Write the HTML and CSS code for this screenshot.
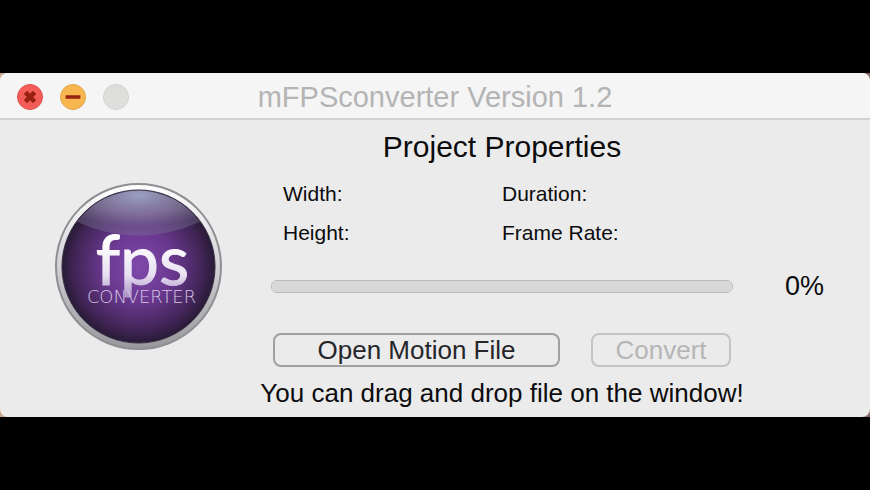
FILE: index.html
```
<!DOCTYPE html>
<html lang="en">
<head>
    <meta charset="UTF-8">
    <meta name="viewport" content="width=device-width, initial-scale=1.0">
    <title>mFPSconverter Version 1.2</title>
    <link rel="stylesheet" href="styles.css">
</head>
<body>
    <div class="desktop">
        <div class="window">
            <!-- Title Bar -->
            <header class="title-bar">
                <div class="window-buttons">
                    <button type="button" class="dot close" aria-label="Close">
                        <svg viewBox="0 0 26 26"><path d="M8 8L18 18M18 8L8 18"/></svg>
                    </button>
                    <button type="button" class="dot minimize" aria-label="Minimize">
                        <svg viewBox="0 0 26 26"><path d="M5 13H21"/></svg>
                    </button>
                    <button type="button" class="dot zoom" aria-label="Zoom" disabled></button>
                </div>
                <h1>mFPSconverter Version 1.2</h1>
            </header>

            <main class="content">
                <!-- Logo -->
                <svg class="logo" viewBox="0 0 170 170" role="img" aria-label="fps converter">
                    <defs>
                        <linearGradient id="rim" x1="0" y1="0" x2="0" y2="1">
                            <stop offset="0" stop-color="#ffffff"/>
                            <stop offset="0.5" stop-color="#d2d1d6"/>
                            <stop offset="1" stop-color="#98979c"/>
                        </linearGradient>
                        <radialGradient id="ball" cx="0.5" cy="0.5" r="0.52">
                            <stop offset="0" stop-color="#8049ab"/>
                            <stop offset="0.45" stop-color="#69388e"/>
                            <stop offset="0.8" stop-color="#422558"/>
                            <stop offset="1" stop-color="#22182e"/>
                        </radialGradient>
                        <radialGradient id="shine" cx="0.5" cy="0.1" r="0.7">
                            <stop offset="0" stop-color="#a5aed0" stop-opacity="0.9"/>
                            <stop offset="0.6" stop-color="#9a92b4" stop-opacity="0.65"/>
                            <stop offset="1" stop-color="#7c7398" stop-opacity="0.4"/>
                        </radialGradient>
                        <linearGradient id="letters" x1="0" y1="0" x2="0" y2="1">
                            <stop offset="0.3" stop-color="#ffffff"/>
                            <stop offset="0.7" stop-color="#e8e0f2"/>
                            <stop offset="1" stop-color="#a184bd"/>
                        </linearGradient>
                    </defs>
                    <circle cx="85" cy="85" r="83" fill="url(#rim)" stroke="#8f8e93" stroke-width="2"/>
                    <circle cx="85" cy="85" r="77" fill="url(#ball)" stroke="#3b3145" stroke-width="1"/>
                    <path d="M23 40A77 77 0 0 1 147 40Q85 68 23 40Z" fill="url(#shine)"/>
                    <text class="logo-name" x="89" y="104" text-anchor="middle" fill="url(#letters)" stroke="url(#letters)">fps</text>
                    <text class="logo-sub" x="88" y="122" text-anchor="middle">CONVERTER</text>
                </svg>

                <h2>Project Properties</h2>

                <!-- Project Fields -->
                <div class="fields">
                    <span>Width:</span>
                    <span>Duration:</span>
                    <span>Height:</span>
                    <span>Frame Rate:</span>
                </div>

                <!-- Progress -->
                <progress id="progress" value="0" max="100"></progress>
                <label class="percent" for="progress">0%</label>

                <!-- Buttons -->
                <div class="buttons">
                    <button type="button" class="btn open">Open Motion File</button>
                    <button type="button" class="btn convert" disabled>Convert</button>
                </div>

                <p class="hint">You can drag and drop file on the window!</p>
            </main>
        </div>
    </div>
</body>
</html>
```
FILE: styles.css
```
/* Basic Reset */
* { box-sizing: border-box; margin: 0; padding: 0; }

body {
    min-height: 100vh;
    display: flex;
    align-items: center;
    background: #000;
    font-family: "Liberation Sans", Arial, sans-serif;
    color: #0c0c0e;
}

.desktop {
    width: 100%;
    background: linear-gradient(to right, #cda88f, #8a6a66);
}

.window {
    background: #ebebeb;
    border-radius: 8px;
    overflow: hidden;
}

/* Title Bar */
.title-bar {
    display: grid;
    grid-template-columns: 1fr auto 1fr;
    align-items: center;
    height: 47px;
    padding: 3px 17px 0;
    background: #f5f5f5;
    border-bottom: 2px solid #d2d2d2;
}

.title-bar h1 {
    font-size: 29px;
    font-weight: normal;
    line-height: 34px;
    color: #b4b4b4;
    white-space: nowrap;
}

.window-buttons {
    display: flex;
    gap: 17px;
}

.dot {
    width: 26px;
    height: 26px;
    border: 1px solid #d2d2d0;
    border-radius: 50%;
    background: #dededd;
}

.dot svg {
    display: block;
    width: 100%;
    height: 100%;
    fill: none;
    stroke: #98200f;
    stroke-width: 5;
}

.close {
    background: #f45c5a;
    border-color: #e0504e;
}

.minimize {
    background: #f7b650;
    border-color: #e2a548;
}

.minimize svg {
    stroke-width: 4;
}

/* Window Content */
.content {
    display: grid;
    grid-template-columns: 169px minmax(0, 1fr) 43px;
    column-gap: 48px;
    padding: 10px 46px 9px 54px;
}

.logo {
    grid-column: 1;
    grid-row: 1 / 6;
    align-self: center;
    width: 169px;
    height: 169px;
    margin-bottom: 6px;
}

.logo-name {
    font-family: Lato, sans-serif;
    font-size: 70px;
    stroke-width: 1px;
}

.logo-sub {
    font-family: "DejaVu Sans", sans-serif;
    font-size: 18px;
    font-weight: 200;
    fill: #d6c6e4;
}

h2 {
    grid-column: 2;
    font-size: 30px;
    font-weight: normal;
    line-height: 34px;
    text-align: center;
}

.fields {
    grid-column: 2;
    display: grid;
    grid-template-columns: 1fr 1fr;
    margin-top: 10px;
    padding: 0 12px;
    font-size: 21px;
    line-height: 39px;
}

progress {
    grid-column: 2;
    align-self: center;
    width: 100%;
    height: 13px;
    margin-top: 18px;
    appearance: none;
    border: 1px solid #bababa;
    border-radius: 6px;
    background: #d8d8d8;
    overflow: hidden;
}

progress::-webkit-progress-bar {
    background: #d8d8d8;
}

progress::-webkit-progress-value {
    background: #4a90e2;
}

.percent {
    grid-column: 3;
    margin-top: 17px;
    font-size: 27px;
    line-height: 34px;
    text-align: right;
}

/* Buttons */
.buttons {
    grid-column: 2;
    display: flex;
    gap: 31px;
    margin-top: 30px;
    padding: 0 2px;
}

.btn {
    height: 34px;
    border: 2px solid #a0a0a0;
    border-radius: 8px;
    background: #ebebeb;
    font-family: inherit;
    font-size: 26px;
    line-height: 30px;
    color: #26262a;
    white-space: nowrap;
}

.open {
    flex: 1;
}

.convert {
    width: 140px;
    border-color: #c4c4c4;
    color: #b6b6b6;
}

.hint {
    grid-column: 2;
    display: flex;
    justify-content: center;
    margin-top: 11px;
    font-size: 26px;
    line-height: 30px;
    white-space: nowrap;
}
```
